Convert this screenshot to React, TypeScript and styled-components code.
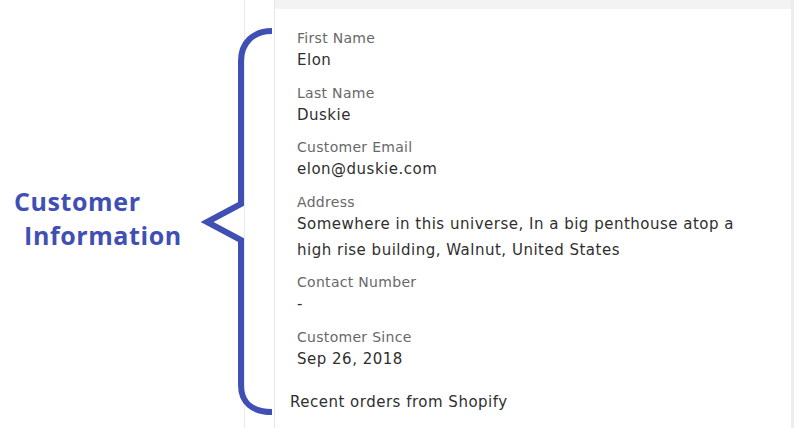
import React, {FC} from 'react'
import styled, {createGlobalStyle} from 'styled-components';

const GlobalStyle = createGlobalStyle`
  html, body {
    margin: 0;
    padding: 0;
    background: #fff;
  }
`;

const ACCENT = '#3f4fb3';

const Page = styled.div`
  position: relative;
  width: 806px;
  height: 428px;
  display: flex;
  overflow: hidden;
  background: #fff;
  font-family: "DejaVu Sans", "Liberation Sans", sans-serif;
`;

const Annotation = styled.div`
  width: 245px;
  flex-shrink: 0;
  border-right: 1px solid #e9e9e9;
  padding-top: 184px;
  box-sizing: border-box;
`;

const Heading = styled.div`
  font-family: "Open Sans", "Liberation Sans", sans-serif;
  font-weight: 700;
  font-size: 25px;
  line-height: 34px;
  color: ${ACCENT};
  letter-spacing: 0.6px;
`;

const HeadingLine = styled.div<{ $indent: number }>`
  padding-left: ${p => p.$indent}px;
`;

const Gutter = styled.div`
  width: 29px;
  flex-shrink: 0;
`;

const Panel = styled.div`
  width: 517px;
  flex-shrink: 0;
  border-left: 1px solid #e6e6e6;
  box-sizing: border-box;
  display: flex;
  flex-direction: column;
`;

const TopBar = styled.div`
  height: 9px;
  background: #f3f3f3;
`;

const Fields = styled.div`
  padding: 21px 0 0 22px;
  width: 462px;
  display: flex;
  flex-direction: column;
  gap: 11.5px;
`;

const Field = styled.div`
  display: flex;
  flex-direction: column;
`;

const Label = styled.div`
  font-size: 14px;
  line-height: 17px;
  letter-spacing: 0.3px;
  color: #686868;
`;

const Value = styled.div`
  font-size: 15px;
  line-height: 26px;
  letter-spacing: 0.5px;
  color: #2f2f2f;
`;

const Footer = styled.div`
  margin-top: 18px;
  padding-left: 15px;
  font-size: 15px;
  line-height: 25px;
  letter-spacing: 0.5px;
  color: #2f2f2f;
`;

const EdgeStrip = styled.div`
  width: 3px;
  flex-shrink: 0;
  background: #ededed;
`;

const Brace = styled.svg`
  position: absolute;
  left: 0;
  top: 0;
  pointer-events: none;
`;

const fields = [
    {label: 'First Name', value: 'Elon'},
    {label: 'Last Name', value: 'Duskie'},
    {label: 'Customer Email', value: 'elon@duskie.com'},
    {label: 'Address', value: 'Somewhere in this universe, In a big penthouse atop a high rise building, Walnut, United States'},
    {label: 'Contact Number', value: '-'},
    {label: 'Customer Since', value: 'Sep 26, 2018'},
];

const App: FC = () => (
    <>
        <GlobalStyle/>
        <Page>
            <Annotation>
                <Heading>
                    <HeadingLine $indent={14}>Customer</HeadingLine>
                    <HeadingLine $indent={24}>Information</HeadingLine>
                </Heading>
            </Annotation>
            <Gutter/>
            <Panel>
                <TopBar/>
                <Fields>
                    {fields.map(f => (
                        <Field key={f.label}>
                            <Label>{f.label}</Label>
                            <Value>{f.value}</Value>
                        </Field>
                    ))}
                </Fields>
                <Footer>Recent orders from Shopify</Footer>
            </Panel>
            <EdgeStrip/>
            <Brace width="290" height="428" viewBox="0 0 290 428">
                <path
                    d="M 272 31 C 253 31, 241 43, 241 61 L 241 204 L 207 222 L 241 240 L 241 385 C 241 403, 253 412, 272 412"
                    fill="none"
                    stroke={ACCENT}
                    strokeWidth="6"
                    strokeLinejoin="miter"
                />
            </Brace>
        </Page>
    </>
);

export default App;
